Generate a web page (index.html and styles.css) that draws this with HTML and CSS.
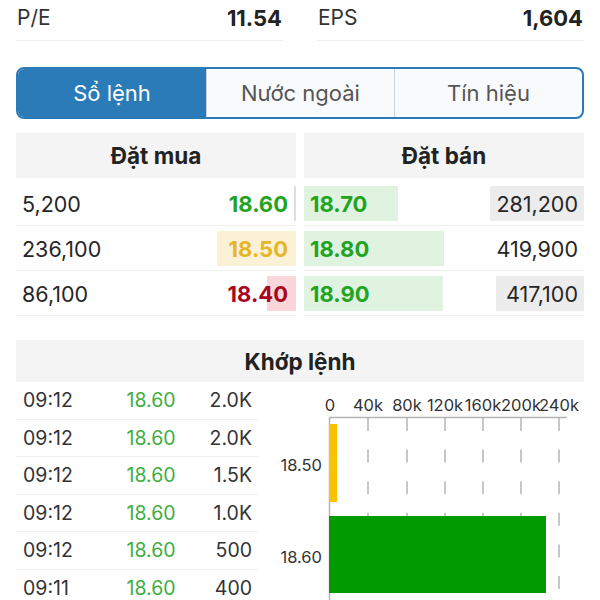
FILE: index.html
```html
<!DOCTYPE html>
<html lang="vi">
<head>
<meta charset="utf-8">
<title>Sổ lệnh</title>
<link rel="stylesheet" href="styles.css">
</head>
<body>
<div class="page">
  <div class="stats">
    <div class="stat"><span class="stat-label">P/E</span><span class="stat-value">11.54</span></div>
    <div class="stat"><span class="stat-label">EPS</span><span class="stat-value">1,604</span></div>
  </div>

  <div class="tabs">
    <div class="tab active">Sổ lệnh</div>
    <div class="tab">Nước ngoài</div>
    <div class="tab">Tín hiệu</div>
  </div>

  <div class="book">
    <div class="panel">
      <div class="panel-head">Đặt mua</div>
      <div class="ob-row">
        <span class="bar bar-right bar-thin" style="width:2px"></span>
        <span class="qty">5,200</span><span class="price up">18.60</span>
      </div>
      <div class="ob-row">
        <span class="bar bar-right bar-yellow" style="width:79px"></span>
        <span class="qty">236,100</span><span class="price ref">18.50</span>
      </div>
      <div class="ob-row">
        <span class="bar bar-right bar-red" style="width:29px"></span>
        <span class="qty">86,100</span><span class="price down">18.40</span>
      </div>
    </div>
    <div class="panel">
      <div class="panel-head">Đặt bán</div>
      <div class="ob-row sell">
        <span class="bar bar-left bar-green" style="width:94px"></span>
        <span class="bar bar-right bar-gray" style="width:94px"></span>
        <span class="price up">18.70</span><span class="qty">281,200</span>
      </div>
      <div class="ob-row sell">
        <span class="bar bar-left bar-green" style="width:140px"></span>
        <span class="price up">18.80</span><span class="qty">419,900</span>
      </div>
      <div class="ob-row sell">
        <span class="bar bar-left bar-green" style="width:139px"></span>
        <span class="bar bar-right bar-gray" style="width:88px"></span>
        <span class="price up">18.90</span><span class="qty">417,100</span>
      </div>
    </div>
  </div>

  <div class="match-head">Khớp lệnh</div>
  <div class="match">
    <div class="trades">
      <div class="trade"><span class="t-time">09:12</span><span class="t-price">18.60</span><span class="t-vol">2.0K</span></div>
      <div class="trade"><span class="t-time">09:12</span><span class="t-price">18.60</span><span class="t-vol">2.0K</span></div>
      <div class="trade"><span class="t-time">09:12</span><span class="t-price">18.60</span><span class="t-vol">1.5K</span></div>
      <div class="trade"><span class="t-time">09:12</span><span class="t-price">18.60</span><span class="t-vol">1.0K</span></div>
      <div class="trade"><span class="t-time">09:12</span><span class="t-price">18.60</span><span class="t-vol">500</span></div>
      <div class="trade"><span class="t-time">09:11</span><span class="t-price">18.60</span><span class="t-vol">400</span></div>
    </div>
    <svg class="chart" width="306" height="228" viewBox="278 382 306 228">
      <g class="ax-labels">
        <text x="330" y="411">0</text>
        <text x="368" y="411">40k</text>
        <text x="407" y="411">80k</text>
        <text x="445" y="411">120k</text>
        <text x="483" y="411">160k</text>
        <text x="521" y="411">200k</text>
        <text x="559" y="411">240k</text>
      </g>
      <g class="grid">
        <line x1="368" y1="418" x2="368" y2="610"/>
        <line x1="407" y1="418" x2="407" y2="610"/>
        <line x1="445" y1="418" x2="445" y2="610"/>
        <line x1="483" y1="418" x2="483" y2="610"/>
        <line x1="521" y1="418" x2="521" y2="610"/>
        <line x1="559" y1="418" x2="559" y2="610"/>
      </g>
      <line class="axis" x1="329" y1="417.5" x2="567" y2="417.5"/>
      <line class="axis" x1="329.5" y1="417" x2="329.5" y2="610"/>
      <rect class="bar-y" x="329" y="424" width="8" height="78"/>
      <rect class="bar-g" x="329" y="516" width="217" height="77"/>
      <g class="y-labels">
        <text x="322" y="471">18.50</text>
        <text x="322" y="563">18.60</text>
      </g>
    </svg>
  </div>
</div>
</body>
</html>
```

FILE: styles.css
```css
html {
  overflow: hidden;
}
body {
  margin: 0;
  background: #ffffff;
  color: #222222;
  font-family: Inter, "Noto Sans", "Liberation Sans", sans-serif;
}
.page {
  padding: 0 16px;
}

/* stats */
.stats {
  display: grid;
  grid-template-columns: 1fr 1fr;
  column-gap: 34px;
}
.stat {
  display: flex;
  justify-content: space-between;
  align-items: center;
  height: 41px;
  padding: 0 1px 5px 1px;
  box-sizing: border-box;
  border-bottom: 1px solid #efefef;
}
.stat-label {
  font-size: 21px;
  color: #333333;
}
.stat-value {
  font-size: 22px;
  font-weight: 700;
  color: #222222;
}

/* tabs */
.tabs {
  margin-top: 26px;
  display: grid;
  grid-template-columns: 1fr 1fr 1fr;
  height: 52px;
  border: 2px solid #2b7bb9;
  border-radius: 8px;
  overflow: hidden;
  box-sizing: border-box;
  background: #f9fafb;
}
.tab {
  display: flex;
  align-items: center;
  justify-content: center;
  font-size: 22px;
  color: #555555;
  border-left: 1px solid #c9d3dc;
}
.tab:first-child {
  border-left: none;
}
.tab.active {
  background: #2b7bb9;
  color: #ffffff;
}

/* order book */
.book {
  margin-top: 14px;
  display: grid;
  grid-template-columns: 1fr 1fr;
  column-gap: 8px;
}
.panel-head {
  height: 45px;
  display: flex;
  align-items: center;
  justify-content: center;
  background: #f4f4f4;
  font-size: 22.5px;
  font-weight: 700;
  color: #222222;
  margin-bottom: 3px;
}
.ob-row {
  position: relative;
  display: flex;
  justify-content: space-between;
  align-items: center;
  height: 45px;
  box-sizing: border-box;
  border-bottom: 1px solid #efefef;
  padding: 1px 8px 0 6px;
  font-size: 21.5px;
}
.ob-row.sell {
  padding: 1px 6px 0 6px;
}
.qty,
.price {
  position: relative;
  color: #262626;
}
.price {
  font-size: 22px;
  font-weight: 700;
}
.price.up {
  color: #22a322;
}
.price.ref {
  color: #e5b62a;
}
.price.down {
  color: #a9061f;
}
.bar {
  position: absolute;
  top: 5px;
  bottom: 4px;
}
.bar-right {
  right: 0;
}
.bar-left {
  left: 0;
}
.bar-thin {
  background: #dedede;
}
.bar-yellow {
  background: #fbf1d6;
}
.bar-red {
  background: #f8d6d9;
}
.bar-green {
  background: #e0f3e0;
}
.bar-gray {
  background: #ececec;
}

/* matched orders */
.match-head {
  margin-top: 24px;
  height: 42px;
  display: flex;
  align-items: center;
  justify-content: center;
  background: #f4f4f4;
  font-size: 22.5px;
  font-weight: 700;
  color: #222222;
}
.match {
  display: grid;
  grid-template-columns: 242px 1fr;
  column-gap: 20px;
}
.trade {
  display: grid;
  grid-template-columns: 98px 60px 1fr;
  align-items: center;
  height: 37.5px;
  box-sizing: border-box;
  border-bottom: 1px solid #efefef;
  padding: 0 6px 0 7px;
  font-size: 19.5px;
  color: #333333;
}
.t-price {
  text-align: center;
  color: #3fae3f;
}
.t-vol {
  text-align: right;
}

/* chart */
.chart {
  display: block;
}
.ax-labels text {
  font-family: Inter, "Noto Sans", sans-serif;
  font-size: 16.5px;
  fill: #333333;
  text-anchor: middle;
}
.y-labels text {
  font-family: Inter, "Noto Sans", sans-serif;
  font-size: 16.5px;
  fill: #333333;
  text-anchor: end;
}
.grid line {
  stroke: #b5b5b5;
  stroke-width: 1.5;
  stroke-dasharray: 13 18.6;
}
.axis {
  stroke: #b5b5b5;
  stroke-width: 1.5;
}
.bar-y {
  fill: #f7c300;
}
.bar-g {
  fill: #009b00;
}
```
